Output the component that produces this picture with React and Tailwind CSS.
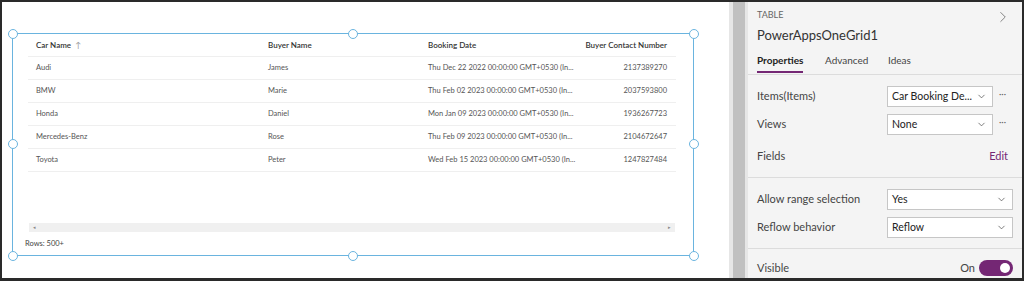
import { ChevronDown, ChevronRight } from 'lucide-react'

const rows = [
  { car: 'Audi', buyer: 'James', date: 'Thu Dec 22 2022 00:00:00 GMT+0530 (In...', phone: '2137389270' },
  { car: 'BMW', buyer: 'Marie', date: 'Thu Feb 02 2023 00:00:00 GMT+0530 (In...', phone: '2037593800' },
  { car: 'Honda', buyer: 'Daniel', date: 'Mon Jan 09 2023 00:00:00 GMT+0530 (In...', phone: '1936267723' },
  { car: 'Mercedes-Benz', buyer: 'Rose', date: 'Thu Feb 09 2023 00:00:00 GMT+0530 (In...', phone: '2104672647' },
  { car: 'Toyota', buyer: 'Peter', date: 'Wed Feb 15 2023 00:00:00 GMT+0530 (In...', phone: '1247827484' },
]

function Handle({ className }) {
  return <span className={`absolute w-[10px] h-[10px] rounded-full bg-white border border-[#6ab4df] ${className}`} />
}

function Dropdown({ value, wide }) {
  return (
    <div className={`${wide ? 'w-[126px]' : 'w-[106px]'} h-[21px] bg-white border border-[#c6c6c6] flex items-center justify-between pl-[4px] pr-[5px]`}>
      <span className="text-[10.5px] text-[#222] whitespace-nowrap">{value}</span>
      <ChevronDown className="w-[11px] h-[11px] shrink-0 text-[#444]" strokeWidth={1.5} />
    </div>
  )
}

function PropRow({ label, value, more }) {
  return (
    <div className="h-[21px] flex items-center">
      <span className="flex-1 text-[11px] text-[#444]">{label}</span>
      <Dropdown value={value} wide={!more} />
      {more && <span className="w-[20px] text-[9px] text-[#666] leading-none pl-[6px] -mt-[6px]">···</span>}
    </div>
  )
}

export default function App() {
  return (
    <div className="w-[1024px] h-[281px] border-2 border-b-[3px] border-[#2a2a2a] flex bg-white overflow-hidden font-['Lato',sans-serif]">
      {/* canvas */}
      <div className="w-[727px] shrink-0 bg-white pl-[10px] pt-[31px]">
        <div className="relative w-[682px] h-[223px] border border-[#6ab4df] flex flex-col">
          <Handle className="-left-[5.5px] -top-[5.5px]" />
          <Handle className="left-[335px] -top-[5.5px]" />
          <Handle className="-right-[5.5px] -top-[5.5px]" />
          <Handle className="-left-[5.5px] top-[105px]" />
          <Handle className="-right-[5.5px] top-[105px]" />
          <Handle className="-left-[5.5px] -bottom-[5.5px]" />
          <Handle className="left-[335px] -bottom-[5.5px]" />
          <Handle className="-right-[5.5px] -bottom-[5.5px]" />

          <div className="ml-[15px] w-[648px] whitespace-nowrap">
            <div className="h-[23px] flex items-center border-b border-[#efefef] text-[8px] font-semibold text-[#333]">
              <div className="w-[232px] pl-[8px]">
                Car Name <span className="font-normal text-[#999] ml-[2px]">↑</span>
              </div>
              <div className="w-[160px] pl-[8px]">Buyer Name</div>
              <div className="w-[161px] pl-[8px]">Booking Date</div>
              <div className="flex-1 text-right pr-[9px]">Buyer Contact Number</div>
            </div>
            {rows.map((r) => (
              <div key={r.car} className="h-[23px] flex items-center border-b border-[#efefef] text-[7.5px] text-[#555]">
                <div className="w-[232px] pl-[8px]">{r.car}</div>
                <div className="w-[160px] pl-[8px]">{r.buyer}</div>
                <div className="w-[161px] pl-[8px]">{r.date}</div>
                <div className="flex-1 text-right pr-[9px]">{r.phone}</div>
              </div>
            ))}
          </div>

          <div className="mt-[51px] ml-[16px] w-[646px] h-[9px] bg-[#f0f0f0] flex items-center justify-between px-[4px] text-[5px] text-[#888]">
            <span>◂</span>
            <span>▸</span>
          </div>
          <div className="mt-[6px] ml-[12px] text-[7.5px] text-[#444]">Rows: 500+</div>
        </div>
      </div>

      {/* gutter */}
      <div className="w-[4px] shrink-0 bg-[#e6e6e6]" />
      <div className="w-[12px] shrink-0 bg-[#c0c0c0]" />
      <div className="w-[3px] shrink-0 bg-[#e6e6e6]" />

      {/* properties panel */}
      <div className="flex-1 bg-[#f4f4f4] flex flex-col">
        <div className="h-[73px] border-b border-[#dcdcdc] px-[9px] relative">
          <ChevronRight className="absolute right-[10px] top-[6px] w-[18px] h-[18px] text-[#777]" strokeWidth={1.2} />
          <div className="pt-[7px] text-[9px] leading-[12px] text-[#666]">TABLE</div>
          <div className="mt-[5px] text-[13px] leading-[18px] text-[#333]">PowerAppsOneGrid1</div>
          <div className="mt-[9px] flex text-[10px] leading-[14px]">
            <div className="w-[68px]">
              <div className="font-bold text-[#222] w-fit">Properties</div>
              <div className="mt-[4px] h-[2px] w-[46px] bg-[#742774]" />
            </div>
            <div className="w-[63px] text-[#444]">Advanced</div>
            <div className="text-[#444]">Ideas</div>
          </div>
        </div>

        <div className="border-b border-[#dcdcdc] px-[9px] pt-[11px] pb-[10px] flex flex-col gap-[7px]">
          <PropRow label="Items(Items)" value="Car Booking De..." more />
          <PropRow label="Views" value="None" more />
          <div className="h-[21px] mt-[4px] flex items-center justify-between">
            <span className="text-[11px] text-[#444]">Fields</span>
            <span className="text-[11px] text-[#742774] pr-[5px]">Edit</span>
          </div>
        </div>

        <div className="border-b border-[#dcdcdc] px-[9px] pt-[11px] pb-[10px] flex flex-col gap-[7px]">
          <PropRow label="Allow range selection" value="Yes" />
          <PropRow label="Reflow behavior" value="Reflow" />
        </div>

        <div className="px-[9px] pt-[11px] flex items-center">
          <span className="flex-1 text-[11px] text-[#444]">Visible</span>
          <span className="text-[11px] text-[#444] mr-[4px]">On</span>
          <div className="w-[34px] h-[16px] rounded-full bg-[#742774] flex items-center justify-end pr-[3px]">
            <span className="w-[10px] h-[10px] rounded-full bg-white" />
          </div>
        </div>
      </div>
    </div>
  )
}
